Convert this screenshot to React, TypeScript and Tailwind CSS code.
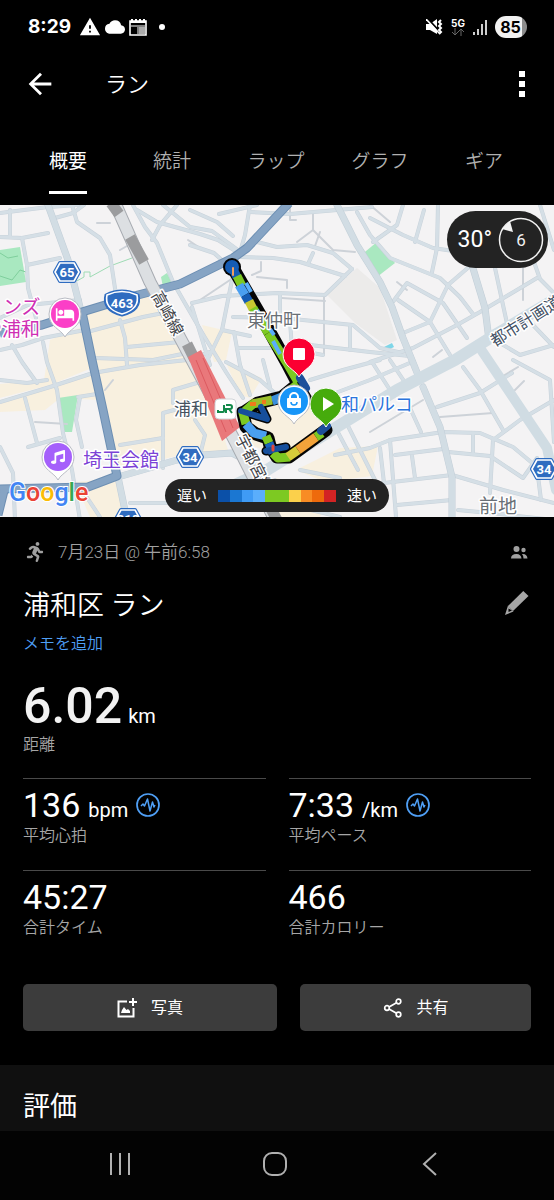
// App.tsx
/* Activity summary screen: route map, key stats, and share actions for one run. */
import type { ReactNode } from "react";
import { FaMusic, FaRunning } from "react-icons/fa";
import { MdArrowBack, MdCloud, MdHotel, MdPlayArrow, MdWarning } from "react-icons/md";

const tabs = ["概要", "統計", "ラップ", "グラフ", "ギア"];

const paceColors = [
  "#0b50a8",
  "#1b77d2",
  "#3f9bf5",
  "#5aaefc",
  "#7dc922",
  "#7dc922",
  "#fbd04b",
  "#f88c24",
  "#ee6a0c",
  "#d32424",
];

// wide streets
const mainRoads = [
  "M48 205L68 260L82 315",
  "M118 477L177 460L202 455L232 453L262 468",
  "M118 477L127 520",
  "M423 387L440 427L452 477L452 520",
  "M472 265L485 308L489 340",
  "M337 205L357 245L380 282L392 307L403 338L418 375",
];

// ordinary streets
const roads = [
  "M0 213L48 207L78 205",
  "M10 210V237L0 237L22 238L48 233",
  "M22 238L27 265L28 288L36 318",
  "M27 265L60 258",
  "M0 318L28 305L80 300",
  "M55 218L73 213L84 205",
  "M72 205L77 222L100 238L110 255L116 295",
  "M133 205L145 227L157 243L173 282L182 298L204 336L226 372L243 398",
  "M137 210L157 222L200 234L218 240L237 252",
  "M177 205L160 225L152 240",
  "M163 205L190 227L212 231L238 250",
  "M190 245L214 253L224 262",
  "M250 205L245 235L240 252",
  "M190 210L217 222L233 236",
  "M219 214L257 205",
  "M257 242L277 247L307 245L333 253L352 269",
  "M240 257L273 258L300 262L345 276",
  "M250 212L290 214L337 210L372 207",
  "M357 212L370 235L390 258L420 270L440 278L460 297L473 314",
  "M313 253L308 264",
  "M192 303L222 296L277 293L325 295L352 269",
  "M280 293V317",
  "M233 317L283 318L353 325L380 348L398 352",
  "M233 275L222 330L205 365",
  "M192 307L210 365",
  "M234 332L240 365L250 395",
  "M222 330L250 336",
  "M238 348L285 348L323 355",
  "M290 320L293 365",
  "M350 325V350",
  "M310 345L370 352L410 356",
  "M370 218L403 235L433 248L460 252",
  "M403 205L397 225L373 242",
  "M438 205L437 248L432 272",
  "M424 210L415 242",
  "M495 268L503 305L508 328",
  "M470 266L448 285L430 322L403 333",
  "M392 303L407 283L443 303L467 338",
  "M398 300L430 322L450 355",
  "M370 362L413 348L457 325L480 312L537 278",
  "M534 262L540 279L554 293",
  "M540 205L554 250",
  "M495 340L520 355L554 345",
  "M533 325L554 347",
  "M513 360L550 380L554 442",
  "M390 360L406 384",
  "M372 362L390 390",
  "M412 358L420 378",
  "M437 407L480 393L512 373",
  "M463 367L480 390L503 430",
  "M335 455L370 448L390 440L443 432L480 433L513 447L537 467",
  "M493 440L520 420L554 400",
  "M493 440L490 493",
  "M473 433V453",
  "M448 452L490 456L523 478L537 458",
  "M395 455L443 449",
  "M412 456L415 478",
  "M380 448L384 483",
  "M390 440L396 517",
  "M350 487L384 483L452 475L503 490L554 503",
  "M397 505L452 500",
  "M410 408L421 432",
  "M536 460L541 500",
  "M458 510L500 514L554 520",
  "M120 320L125 338L127 365",
  "M87 332L143 317L168 312",
  "M127 347L180 342",
  "M95 358L153 360L192 352",
  "M93 373L140 365L187 360L210 352",
  "M43 342L47 362L57 390L63 433L72 470L80 520",
  "M0 350L22 345L43 338L85 330",
  "M0 402L50 387L93 373",
  "M0 380L27 383L47 380",
  "M12 345L22 362L37 383",
  "M25 398L37 443",
  "M28 447L60 438",
  "M78 397L97 394",
  "M80 397L76 420L82 447",
  "M0 447L13 473L15 520",
  "M82 490L100 517",
  "M120 445L163 438",
  "M130 503L167 503",
  "M163 468V413L200 403",
  "M173 403V390L200 382",
  "M226 362L260 380L285 402",
  "M263 360L270 387",
  "M310 380L343 370L380 360",
  "M330 395L370 380L412 362",
  "M334 425L358 470",
  "M345 420L375 480",
  "M300 470L340 478",
  "M200 455L205 435L195 420",
  "M275 480L290 505L340 517",
];

// footpaths and alleys
const lanes = [
  "M290 205V220H296",
  "M313 212V230L297 242",
  "M313 230L333 250L355 252",
  "M261 262V271L252 275",
  "M257 277L287 280V288",
  "M197 302L215 290L230 280",
  "M370 205L390 222",
  "M450 287L472 312",
  "M324 295V355",
  "M282 298L325 301",
  "M320 232L315 246",
  "M188 240L200 248",
  "M120 250L127 246",
  "M440 417L493 413",
  "M370 432L423 400",
  "M503 376L518 367",
  "M513 392L524 381",
  "M397 282L407 290",
  "M433 357L442 350",
  "M97 223H110",
  "M105 390L113 380",
  "M35 422L67 424",
  "M523 246V300",
];

const beigeAreas = [
  "M84 309L160 292L196 362L222 430L228 450L180 455L120 470L96 372Z",
  "M0 400L92 374L97 400L60 398L45 410L0 412Z",
  "M50 340L84 326L92 368L50 385L0 398V384L44 380Z",
  "M75 482L120 478L126 517H90Z",
  "M202 325L232 332L226 360L214 362Z",
  "M226 363L262 378L250 398L240 395Z",
  "M240 440L250 398L300 392L328 425L282 458Z",
  "M296 470L340 448L378 446L372 476L325 482Z",
  "M238 490L276 478L330 490L320 517H270Z",
];

// one lap of the run, drawn as coloured stretches over a single dark outline
const routeOutline =
  "M233 268L262 318L287 363L298 384L282 397L258 403L243 413L246 427L256 434L268 438L270 446L277 457L289 457L326 430";

const routeParts = [
  { d: "M232 267L237 277", color: "#155cb4" },
  { d: "M237 276L242 286", color: "#7dc922" },
  { d: "M239 285L245 295", color: "#4a9ff0" },
  { d: "M245 295L249 302", color: "#155cb4" },
  { d: "M249 301L253 309", color: "#c8c832" },
  { d: "M253 308L268 333", color: "#7dc922" },
  { d: "M268 333L287 363L298 382", color: "#7dc922" },
  { d: "M298 384L282 397", color: "#7dc922" },
  { d: "M282 397L272 401", color: "#3a8fdc" },
  { d: "M272 400L252 404", color: "#9bbf2c" },
  { d: "M254 403L243 413L246 424", color: "#7dc922" },
  { d: "M246 424L254 433L266 436", color: "#4a9ff0" },
  { d: "M266 436L269 443", color: "#7dc922" },
  { d: "M269 443L273 453", color: "#1b63bd" },
  { d: "M273 453L278 458L290 457", color: "#7dc922" },
  { d: "M288 457L298 450", color: "#d5cc3a" },
  { d: "M298 450L316 437", color: "#f2a33a" },
  { d: "M316 437L322 433", color: "#7dc922" },
];

function HexSign({ x, y, label }: { x: number; y: number; label: string }) {
  return (
    <g transform={`translate(${x} ${y})`}>
      <path
        d="M-7 -9H7L12 0L7 9H-7L-12 0Z"
        fill="#2f6cc0"
        stroke="#2f6cc0"
        strokeWidth="4"
        strokeLinejoin="round"
      />
      <path
        d="M-7 -9H7L12 0L7 9H-7L-12 0Z"
        fill="#2f6cc0"
        stroke="#fff"
        strokeWidth="1.6"
        strokeLinejoin="round"
      />
      <text y="5" textAnchor="middle" fontSize="13" fontWeight="700" fill="#fff">
        {label}
      </text>
    </g>
  );
}

function Pin({
  x,
  y,
  color,
  ring,
  children,
}: {
  x: number;
  y: number;
  color: string;
  ring?: boolean;
  children: ReactNode;
}) {
  return (
    <g transform={`translate(${x} ${y})`}>
      <path
        d="M0 23C-4 15 -16 13 -16 0A16 16 0 0 1 16 0C16 13 4 15 0 23Z"
        fill={ring ? "#fff" : color}
        stroke={ring ? "#b9bcc4" : "#fff"}
        strokeWidth="1"
      />
      <circle r="14" fill={color} />
      {children}
    </g>
  );
}

function RouteMap() {
  return (
    <svg
      viewBox="0 205 554 312"
      preserveAspectRatio="xMidYMid slice"
      className="block h-full w-full font-['Roboto','Noto_Sans_CJK_JP',sans-serif]"
      role="img"
      aria-label="ルートマップ"
    >
      <rect x="0" y="205" width="554" height="312" fill="#f4f3f4" />
      {beigeAreas.map((d) => (
        <path key={d} d={d} fill="#f8f0df" />
      ))}
      <path d="M327 295L357 268L380 288L397 340L385 345L355 323Z" fill="#ecebea" />
      <g fill="#a9e8c0">
        <path d="M0 250L20 247L26 282L0 286Z" />
        <path d="M360 256L377 242L395 263L377 277Z" />
        <path d="M58 398L78 395L72 432L63 432Z" />
        <path d="M161 277L167 273L172 283L163 287Z" />
      </g>
      <path d="M0 253L8 258L18 256M0 276L12 280L20 270L26 272" fill="none" stroke="#7fcf9c" />
      <path d="M75 282L84 277V272H90V277L110 266L132 258" fill="none" stroke="#9edbb4" />
      <path d="M384 347L392 343L394 347L386 351Z" fill="#7fd6e8" />

      <g fill="none" strokeLinejoin="round" strokeLinecap="round">
        {lanes.map((d) => (
          <path key={d} d={d} stroke="#cdd2d8" strokeWidth="2" />
        ))}
        {roads.map((d) => (
          <path key={d} d={d} stroke="#c8d2da" strokeWidth="4" />
        ))}
        {roads.map((d) => (
          <path key={d} d={d} stroke="#d5dfe6" strokeWidth="3" />
        ))}
        {mainRoads.map((d) => (
          <path key={d} d={d} stroke="#c2ced7" strokeWidth="7" />
        ))}
        {mainRoads.map((d) => (
          <path key={d} d={d} stroke="#d2dde4" strokeWidth="6" />
        ))}
        <g stroke="#d0dce3">
          <path d="M235 485L267 470L340 425L397 390L455 360L490 338L554 300" strokeWidth="12" />
          <path d="M478 345L547 448L556 490" strokeWidth="10" />
        </g>
        {/* national highways */}
        <g stroke="#6d8fb3" strokeWidth="9" strokeLinecap="butt">
          <path d="M0 333L42 325L82 312L138 295L180 284L233 258L247 248L289 203" />
          <path d="M82 312L92 360L103 410L117 476L88 487L0 489" />
          <path d="M5 487L-2 515" />
        </g>
        <g stroke="#86a4c4" strokeWidth="7" strokeLinecap="butt">
          <path d="M0 333L42 325L82 312L138 295L180 284L233 258L247 248L289 203" />
          <path d="M82 312L92 360L103 410L117 476L88 487L0 489" />
          <path d="M5 487L-2 515" />
        </g>
        {/* railway */}
        <path d="M115 203L150 282L200 375L236 443L276 522" stroke="#a7abb1" strokeWidth="13" />
        <path d="M115 203L150 282L200 375L236 443L276 522" stroke="#dcdfe2" strokeWidth="11" />
        <g stroke="#9b9c9e" strokeWidth="11" strokeLinecap="butt">
          <path d="M111 203L119 214" />
          <path d="M130 237L144 262" />
          <path d="M187 344L195 360" />
          <path d="M270 507L277 520" />
        </g>
      </g>
      <path d="M188 357L201 350L240 427L222 441Z" fill="#e9787b" />
      <path d="M196 360L226 432M203 358L233 428" stroke="#dc5a60" fill="none" />

      {/* recorded track */}
      <g fill="none" strokeLinejoin="round" strokeLinecap="round">
        <path d="M296 368L305 388L327 425" stroke="#0c0c0c" strokeWidth="3" />
        <path d={routeOutline} stroke="#050505" strokeWidth="13" />
        <path d="M241 411L267 419L261 407M266 451L286 447" stroke="#050505" strokeWidth="9" />
        <circle cx="232" cy="267" r="9" fill="#050505" />
        <circle cx="232" cy="267" r="7" fill="#155cb4" />
        {routeParts.map((part) => (
          <path
            key={part.d}
            d={part.d}
            stroke={part.color}
            strokeWidth="9"
            strokeLinecap="butt"
          />
        ))}
        <path d="M241 411L267 419L261 407M266 451L286 447" stroke="#164f9c" strokeWidth="6" />
        <path d="M300 378L306 388M321 431L327 426" stroke="#1c4f9a" strokeWidth="8" />
        <g stroke="#5aaefc" strokeWidth="4" strokeLinecap="butt">
          <path d="M246 283L251 292" />
          <path d="M257 310L261 318" />
          <path d="M270 329L274 335" />
          <path d="M273 341L280 354" />
        </g>
        <path d="M233 268V275" stroke="#f0a060" strokeWidth="2" />
        <path d="M250 404H256M262 402H266" stroke="#ef7a1c" strokeWidth="4" strokeLinecap="butt" />
        <path d="M273 450V446" stroke="#e0483c" strokeWidth="3" />
      </g>

      {/* place names, with a light halo so they read over the streets */}
      <g
        stroke="#fff"
        strokeWidth="3"
        strokeLinejoin="round"
        paintOrder="stroke"
        className="font-normal"
      >
        <text x="3" y="314" fontSize="19" fill="#cf2fb4">
          ンズ
        </text>
        <text x="-17" y="336" fontSize="19" fill="#cf2fb4">
          や浦和
        </text>
        <text x="174" y="415" fontSize="17" fill="#45525f">
          浦和
        </text>
        <text x="247" y="327" fontSize="18" fill="#6a7076">
          東仲町
        </text>
        <text x="341" y="411" fontSize="18" fill="#2b74dd">
          和パルコ
        </text>
        <text x="83" y="467" fontSize="19" fill="#7c43d6">
          埼玉会館
        </text>
        <text x="479" y="513" fontSize="19" fill="#6a7076">
          前地
        </text>
        <text transform="translate(495 347) rotate(-32)" fontSize="16" fill="#3f5064">
          都市計画道
        </text>
        <text transform="translate(151 295) rotate(61)" fontSize="16" fill="#3e4247">
          高崎線
        </text>
        <text transform="translate(235 438) rotate(63)" fontSize="16" fill="#3e4247">
          宇都宮線
        </text>
      </g>

      <HexSign x={67} y={272} label="65" />
      <HexSign x={190} y={457} label="34" />
      <HexSign x={544} y={469} label="34" />
      <HexSign x={128} y={519} label="318" />
      <path
        d="M106 295Q122 287 138 295Q142 310 122 315Q102 310 106 295Z"
        fill="#2f6cc0"
        stroke="#2f6cc0"
        strokeWidth="3"
      />
      <path
        d="M107 295Q122 288 137 295Q140 309 122 314Q104 309 107 295Z"
        fill="#2f6cc0"
        stroke="#fff"
        strokeWidth="1.6"
      />
      <text x="122" y="308" textAnchor="middle" fontSize="13" fontWeight="700" fill="#fff">
        463
      </text>

      <rect x="215" y="399" width="21" height="20" rx="4" fill="#fff" stroke="#d0d4d8" />
      <path
        d="M218 410V412H223Q224 412 224 411V405M226 413V409H230Q232 409 232 407T230 405H226M229 409L232 413"
        fill="none"
        stroke="#138a4b"
        strokeWidth="2"
      />

      <Pin x={65} y={314} color="#fb3fc7" ring>
        <MdHotel x="-10" y="-10" size={20} color="#fff" />
      </Pin>
      <Pin x={58} y={457} color="#a560fb" ring>
        <FaMusic x="-7" y="-7" size={14} color="#fff" />
      </Pin>
      <Pin x={299} y={354} color="#fb0032">
        <rect x="-6" y="-6" width="12" height="12" rx="1" fill="#fff" />
      </Pin>
      <Pin x={326} y={404} color="#46ab0c">
        <MdPlayArrow x="-11" y="-12" size={24} color="#fff" />
      </Pin>
      <Pin x={294} y={401} color="#1795f8" ring>
        <rect x="-7" y="-3" width="14" height="10" rx="1" fill="#fff" />
        <path d="M-4 -2V-4A4 4 0 0 1 4 -4V-2" fill="none" stroke="#fff" strokeWidth="2" />
        <path d="M-3 1A3 3 0 0 0 3 1" fill="none" stroke="#1795f8" strokeWidth="1.5" />
      </Pin>

      <text
        x="9"
        y="501"
        fontSize="25"
        fontWeight="500"
        stroke="#fff"
        strokeWidth="2"
        paintOrder="stroke"
      >
        <tspan fill="#4285f4">G</tspan>
        <tspan fill="#ea4335">o</tspan>
        <tspan fill="#fbbc05">o</tspan>
        <tspan fill="#4285f4">g</tspan>
        <tspan fill="#34a853">l</tspan>
        <tspan fill="#ea4335">e</tspan>
      </text>
    </svg>
  );
}

function StatusBar() {
  return (
    <div className="flex h-[54px] items-center justify-between pr-[27px] pl-7 font-['Inter',sans-serif]">
      <div className="flex items-center gap-1">
        <span className="mr-1 text-[19px] leading-6 font-bold">8:29</span>
        <MdWarning className="size-[22px]" />
        <MdCloud className="size-5" />
        <svg viewBox="0 0 18 18" className="size-[18px]" aria-hidden="true">
          <path d="M1 3H17V17H1Z" fill="none" stroke="#fff" strokeWidth="1.6" />
          <path d="M1 4H17M2 2H4M6 2H8M10 2H12M14 2H16" stroke="#fff" strokeWidth="2" />
          <path d="M2 8H16M9 9V16" stroke="#fff" />
          <path d="M10 9H16V16H10Z" fill="#aaa" />
        </svg>
        <span className="ml-2 size-[6px] rounded-full bg-white" />
      </div>
      <div className="flex items-center gap-2">
        <svg viewBox="0 0 17 16" className="h-4 w-[17px]" aria-hidden="true">
          <path d="M0 5H4L11 0V15L4 11H0Z" fill="#fff" />
          <path d="M2 0L13 12" stroke="#000" strokeWidth="2" />
          <path d="M0 0L13 14" stroke="#fff" strokeWidth="1.6" />
          <path
            d="M15 1L13 3L15 5L13 7L15 9L13 11L15 13L13 15"
            fill="none"
            stroke="#fff"
            strokeWidth="2"
          />
        </svg>
        <div className="flex flex-col items-center">
          <span className="text-[10px] leading-[10px] font-bold">5G</span>
          <svg viewBox="0 0 12 8" className="h-2 w-3" fill="none" stroke="#666" aria-hidden="true">
            <path d="M3 0V7M0 4L3 7L6 4M9 8V1M6 4L9 1L12 4" />
          </svg>
        </div>
        <svg viewBox="0 0 14 16" className="h-4 w-[14px]" aria-hidden="true">
          <path d="M1 13V16M5 10V16M9 5V16M13 1V16" stroke="#fff" strokeWidth="1.6" />
        </svg>
        <span className="flex h-[22px] w-8 items-center justify-center rounded-full bg-linear-to-r from-[#f2f2f2] from-84% to-[#8c8c8c] to-84% pr-px text-base leading-5 font-bold text-black">
          85
        </span>
      </div>
    </div>
  );
}

function PulseBadge() {
  return (
    <svg
      viewBox="0 0 24 24"
      className="size-6 self-center"
      fill="none"
      stroke="#4f9ff5"
      aria-hidden="true"
    >
      <circle cx="12" cy="12" r="11" strokeWidth="1.7" />
      <path
        d="M5 13L7 11L8.5 13L11.5 6L14 18L16.5 9L18 14L19 12"
        strokeWidth="1.5"
        strokeLinejoin="round"
      />
    </svg>
  );
}

function Stat({
  value,
  unit,
  label,
  badge,
}: {
  value: string;
  unit?: string;
  label: string;
  badge?: boolean;
}) {
  return (
    <div className="border-t border-[#4a4a4a] pt-[6px] pb-6">
      <div className="flex h-10 items-baseline gap-2">
        <span className="text-[34px] leading-10">{value}</span>
        {unit && <span className="text-xl leading-6">{unit}</span>}
        {badge && <PulseBadge />}
      </div>
      <p className="mt-px text-base leading-5 font-[350] text-[#a6a6a6]">{label}</p>
    </div>
  );
}

export default function App() {
  return (
    <div className="min-h-screen bg-black font-['Roboto','Noto_Sans_CJK_JP',sans-serif] text-white">
      <StatusBar />

      <header className="flex h-[60px] items-center px-[23px]">
        <button aria-label="戻る">
          <MdArrowBack className="size-[34px]" />
        </button>
        <h1 className="ml-12 flex-1 pt-[2px] text-[22px] leading-8 font-[350]">ラン</h1>
        <button aria-label="メニュー" className="flex flex-col gap-1 px-[6px]">
          <span className="size-[6px] bg-white" />
          <span className="size-[6px] bg-white" />
          <span className="size-[6px] bg-white" />
        </button>
      </header>

      <nav className="grid h-[91px] grid-cols-5 pr-[18px] pl-4">
        {tabs.map((tab, i) => (
          <button
            key={tab}
            className={`flex flex-col items-center pt-9 text-[19px] leading-6 ${
              i === 0 ? "text-white" : "font-[350] text-[#b0b0b0]"
            }`}
          >
            <span
              className={
                i === 0 ? "border-b-[3px] border-white pb-[17px]" : "pb-5"
              }
            >
              {tab}
            </span>
          </button>
        ))}
      </nav>

      <section className="relative h-[312px] overflow-hidden">
        <RouteMap />
        <div className="absolute top-[6px] right-[6px] flex h-[57px] items-center gap-[6px] rounded-full bg-[#232323] pr-1 pl-[11px]">
          <span className="text-[23px] leading-8">30°</span>
          <svg viewBox="0 0 46 46" className="size-[46px]" role="img" aria-label="風速 6">
            <circle cx="23" cy="23" r="21.5" fill="none" stroke="#f2f2f2" strokeWidth="1.5" />
            <path d="M4 12L12 4L15 15Z" fill="#f2f2f2" />
            <text x="23" y="29" textAnchor="middle" fontSize="17" fill="#f2f2f2">
              6
            </text>
          </svg>
        </div>
        <div className="absolute bottom-[5px] left-1/2 flex h-[33px] w-56 -translate-x-1/2 items-center justify-between rounded-full bg-[#232323] px-3 text-[15px] leading-5">
          <span>遅い</span>
          <div className="flex h-3 w-[118px]">
            {paceColors.map((color, i) => (
              <span key={i} className="flex-1" style={{ backgroundColor: color }} />
            ))}
          </div>
          <span>速い</span>
        </div>
      </section>

      <main className="px-[23px] pt-[23px] pb-[34px]">
        <div className="flex h-6 items-center text-[#a0a0a0]">
          <FaRunning className="ml-[2px] size-5" />
          <p className="ml-[13px] flex-1 text-[17px] leading-6 font-[350]">
            7月23日 @ 午前6:58
          </p>
          <svg viewBox="0 0 17 13" className="mr-[3px] h-[13px] w-[17px]" fill="currentColor" aria-hidden="true">
            <circle cx="5.5" cy="3" r="3" />
            <circle cx="12.5" cy="4" r="2.2" />
            <path d="M0 12.5Q0 8 5.5 8Q10 8 10.5 12.5ZM11 8Q16 7.5 16.5 12.5H12.5Q12.5 9.5 11 8Z" />
          </svg>
        </div>

        <div className="mt-6 flex items-center justify-between">
          <h2 className="pt-[2px] text-[27px] leading-8 font-[350]">浦和区 ラン</h2>
          <button aria-label="編集" className="pr-[2px] pb-1">
            <svg viewBox="0 0 24 24" className="size-6" fill="#a6a6a6" aria-hidden="true">
              <path d="M18.3 0L23.5 5L8 20L3 15Z" />
              <path
                fillRule="evenodd"
                d="M3 14.5L0 24L8.5 20.5ZM3.5 17.5L7 19.5L3.5 21Z"
              />
            </svg>
          </button>
        </div>
        <a
          href="#memo"
          className="mt-3 block w-fit text-base leading-5 font-[350] text-[#4f9ff5]"
        >
          メモを追加
        </a>

        <div className="mt-7 flex items-baseline gap-[6px]">
          <span className="text-[50px] leading-[48px] font-medium text-[#f2f2f2]">6.02</span>
          <span className="text-xl leading-6">km</span>
        </div>
        <p className="mt-[3px] mb-[21px] text-base leading-6 font-[350] text-[#a6a6a6]">距離</p>

        <div className="grid grid-cols-2 gap-x-[23px]">
          <Stat value="136" unit="bpm" label="平均心拍" badge />
          <Stat value="7:33" unit="/km" label="平均ペース" badge />
          <Stat value="45:27" label="合計タイム" />
          <Stat value="466" label="合計カロリー" />
        </div>

        <div className="mt-[22px] grid grid-cols-[11fr_10fr] gap-[23px]">
          <button className="flex h-[47px] items-center justify-center gap-[14px] rounded-[5px] bg-[#3c3c3c] text-base leading-5">
            <svg viewBox="0 0 20 20" className="size-5" fill="none" stroke="#fff" aria-hidden="true">
              <path d="M10 3.5H1.5V18.5H16.5V10" strokeWidth="2" />
              <path d="M16 0V8M12 4H20" strokeWidth="2" />
              <path d="M4 15L5 12L7 9L9.5 12L11 11L13 13V15Z" fill="#fff" stroke="none" />
            </svg>
            写真
          </button>
          <button className="flex h-[47px] items-center justify-center gap-[14px] rounded-[5px] bg-[#3c3c3c] text-base leading-5">
            <svg viewBox="0 0 20 20" className="size-5" fill="none" stroke="#fff" aria-hidden="true">
              <circle cx="4" cy="10" r="2.3" strokeWidth="1.7" />
              <circle cx="15.5" cy="3.5" r="2.3" strokeWidth="1.7" />
              <circle cx="15.5" cy="16.5" r="2.3" strokeWidth="1.7" />
              <path d="M6 9L13.5 4.7M6 11L13.5 15.3" strokeWidth="1.7" />
            </svg>
            共有
          </button>
        </div>
      </main>

      <section className="bg-[#101010] px-[23px] pt-[26px] pb-2">
        <h2 className="text-[27px] leading-8">評価</h2>
      </section>

      <footer className="grid h-[69px] grid-cols-3 items-center justify-items-center bg-[#030303] pr-[46px] pb-[3px] pl-[42px]">
        <button aria-label="履歴">
          <svg viewBox="0 0 24 24" className="size-6" fill="none" stroke="#b0b0b0">
            <path d="M3 1V23M12 1V23M21 1V23" strokeWidth="2" />
          </svg>
        </button>
        <button aria-label="ホーム">
          <svg viewBox="0 0 24 24" className="size-6" fill="none" stroke="#b0b0b0">
            <rect x="1" y="1" width="22" height="22" rx="8" strokeWidth="2" />
          </svg>
        </button>
        <button aria-label="戻る">
          <svg viewBox="0 0 24 24" className="size-6" fill="none" stroke="#b0b0b0">
            <path d="M18 1L6 12L18 23" strokeWidth="2" />
          </svg>
        </button>
      </footer>
    </div>
  );
}
